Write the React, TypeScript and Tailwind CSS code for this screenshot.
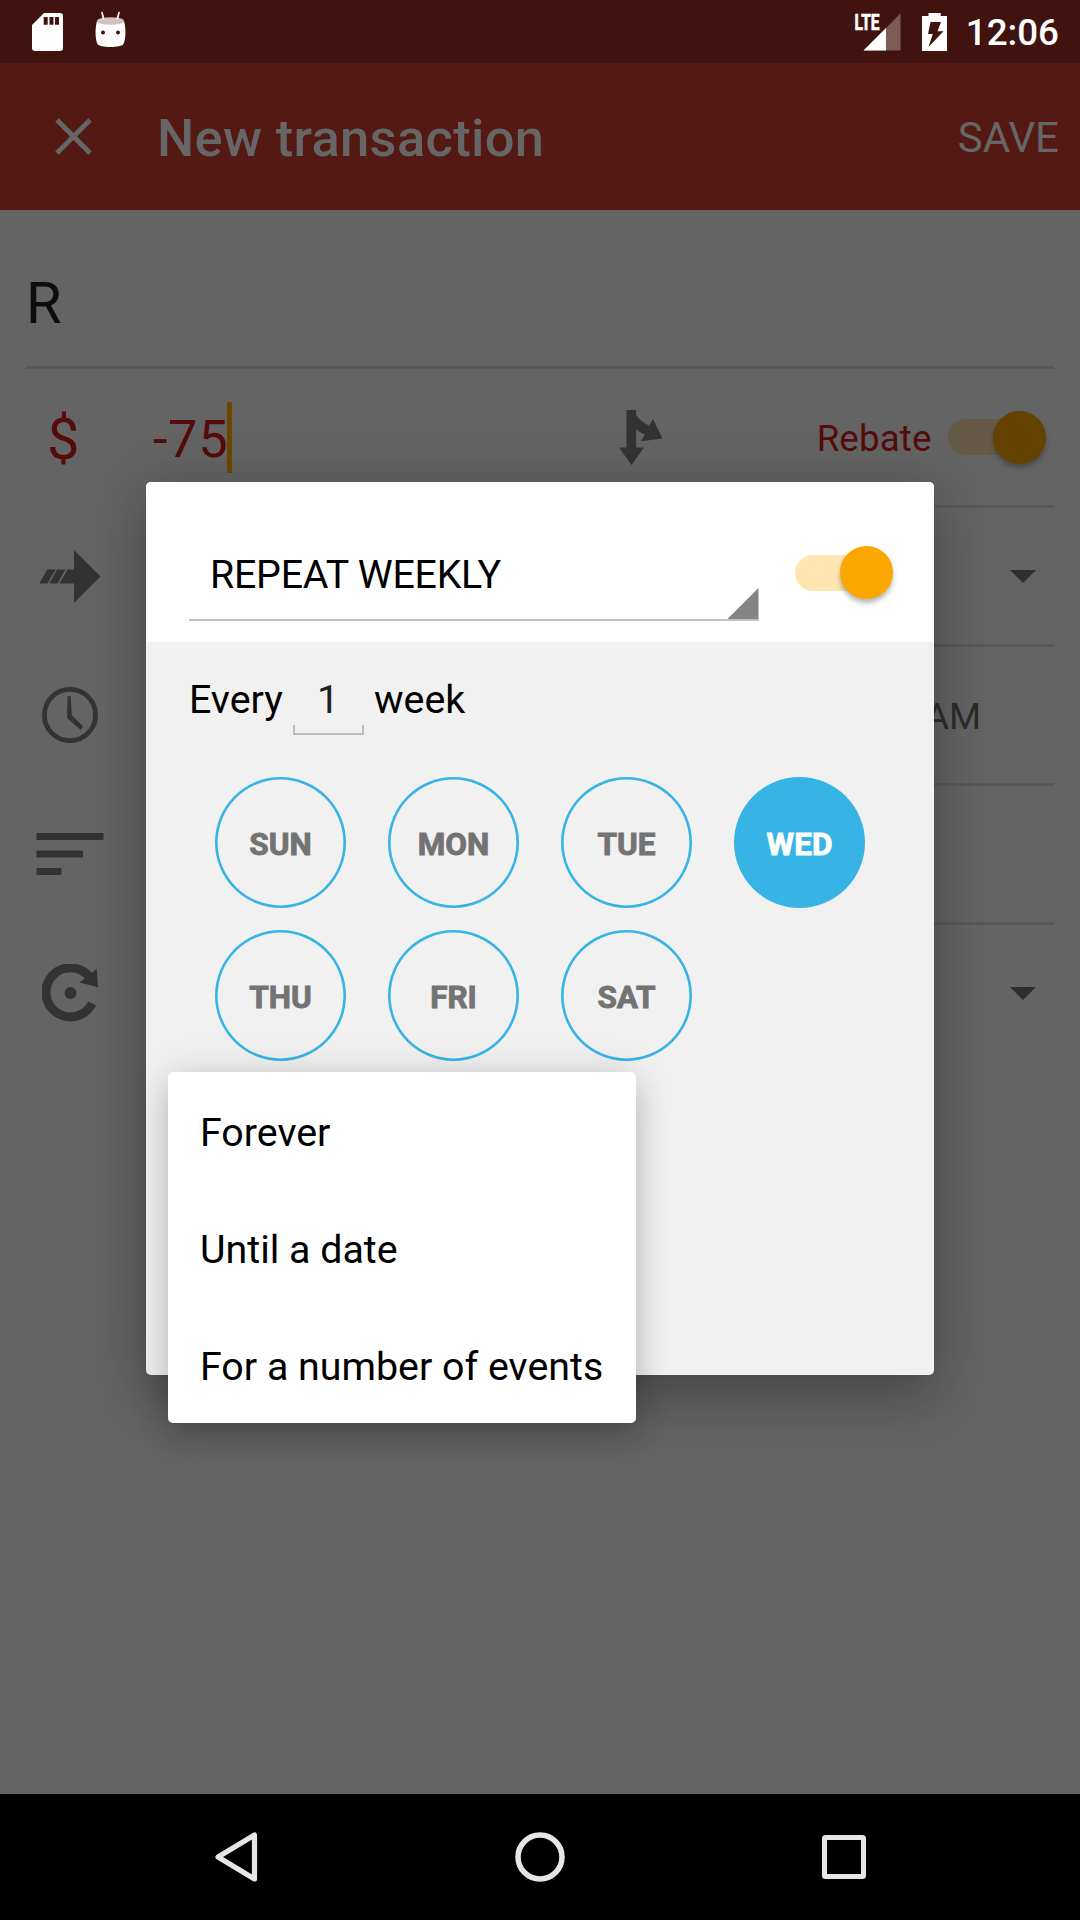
import type { ReactNode } from "react";

const DAYS = ["SUN", "MON", "TUE", "WED", "THU", "FRI", "SAT"];
const END_OPTIONS = ["Forever", "Until a date", "For a number of events"];

function StatusBar() {
  return (
    <header className="flex h-[63px] items-center justify-between bg-[#41130e] pl-8 pr-[21px]">
      <div className="flex items-center gap-8">
        <svg width="31" height="38" viewBox="0 0 31 38">
          <path
            d="M12 0H28a3 3 0 0 1 3 3V35a3 3 0 0 1-3 3H3a3 3 0 0 1-3-3V12Z M11.7 4v7.7h4V4Z M17.5 4v7.7h4V4Z M23 4v7.7h4V4Z"
            fill="#fff"
            fillRule="evenodd"
          />
        </svg>
        <svg width="31" height="42" viewBox="0 0 31 42">
          <path d="M2 10C0 17 0 28 2.500 33C4 37 27 37 28.500 33C31 28 31 17 29 10C27 14 4 14 2 10Z" fill="#fff" />
          <ellipse cx="15.500" cy="10" rx="13.500" ry="3.800" fill="#cfc3c2" />
          <path d="M7 1.500L8.600 8M24 1.500L22.400 8" stroke="#fff" strokeWidth="1.700" strokeLinecap="round" />
          <circle cx="8" cy="21.500" r="2" fill="#41130e" />
          <circle cx="23" cy="21.500" r="2" fill="#41130e" />
        </svg>
      </div>
      <div className="flex items-center">
        <svg width="48" height="50" viewBox="-2 -6 48 50" className="mr-[21px]">
          <path d="M8.500 37.500L45.500 0.500V37.500Z" fill="#7d5c58" />
          <path d="M0 0H24.500V16H0Z" fill="#41130e" />
          <path d="M8.500 37.500L31 15V37.500Z" fill="#fff" />
          <text
            x="-0.500"
            y="16.500"
            fontFamily="Roboto"
            fontWeight="700"
            fontSize="22.500"
            textLength="25"
            lengthAdjust="spacingAndGlyphs"
            fill="#fff"
            stroke="#fff"
            strokeWidth="0.700"
          >
            LTE
          </text>
        </svg>
        <svg width="25" height="38" viewBox="0 0 25 38" className="mr-[19px]">
          <path
            d="M6.500 0H18.700V3H25V38H0V3H6.500Z M8.500 9L6 21H10.800L6.500 34L21.500 18.300H15.500L19 9Z"
            fill="#fff"
            fillRule="evenodd"
          />
        </svg>
        <span className="pt-1 text-[36.75px] font-medium leading-none text-white">12:06</span>
      </div>
    </header>
  );
}

function Toolbar() {
  return (
    <div className="flex h-[147px] items-center bg-[#531912] pl-[55px] pr-[21px] text-[#666]">
      <svg width="37" height="37" viewBox="0 0 37 37" className="mr-[65px]">
        <path d="M2 2L35 35M35 2L2 35" stroke="#666" strokeWidth="5" />
      </svg>
      <h1 className="flex-1 pt-1 text-[52.5px] font-medium leading-none tracking-[0.32px]">New transaction</h1>
      <span className="pt-0.5 text-[42px] leading-none">SAVE</span>
    </div>
  );
}

function Switch({ dimmed }: { dimmed?: boolean }) {
  return (
    <div className="flex h-[53px] w-[98px] items-center">
      <div
        className={
          dimmed
            ? "flex h-9 w-[92px] items-center justify-end rounded-full bg-[#645a46]"
            : "flex h-9 w-[92px] items-center justify-end rounded-full bg-[#ffe5b2]"
        }
      >
        <div
          className={
            dimmed
              ? "-mr-1.5 h-[53px] w-[53px] shrink-0 rounded-full bg-[#644200] shadow-[0_4px_5px_rgba(0,0,0,0.25)]"
              : "-mr-1.5 h-[53px] w-[53px] shrink-0 rounded-full bg-[#fba700] shadow-[0_4px_5px_rgba(0,0,0,0.28)]"
          }
        />
      </div>
    </div>
  );
}

function FormRow({ icon, children, last }: { icon: ReactNode; children?: ReactNode; last?: boolean }) {
  return (
    <div className="flex h-[139px] pr-[26px]">
      <div className="flex h-[136px] w-[147px] shrink-0 items-center">{icon}</div>
      <div
        className={
          last
            ? "flex flex-1 items-center border-b-[3px] border-transparent"
            : "flex flex-1 items-center border-b-[3px] border-[#595959]"
        }
      >
        {children}
      </div>
    </div>
  );
}

function Caret() {
  return (
    <svg width="26" height="13" viewBox="0 0 26 13" className="ml-auto mr-[18.5px]">
      <path d="M0 0H26L13 13Z" fill="#2f2f2f" />
    </svg>
  );
}

function TransferIcon() {
  return (
    <svg width="62" height="53" viewBox="0 0 62 53" className="ml-[39px]">
      <path
        d="M35 0L61.500 26.500L35 53V33.500H20.500L28.500 19.500H35Z M8.200 19.500H16.500L8.500 33.500H0.300Z M18 19.500H26.300L18.600 33.500H10.300Z"
        fill="#333"
      />
    </svg>
  );
}

function ClockIcon() {
  return (
    <svg width="56" height="56" viewBox="0 0 56 56" className="ml-[42px]">
      <circle cx="28" cy="28" r="25.600" fill="none" stroke="#333" strokeWidth="4.800" />
      <path d="M25.500 9H28.700L29.800 28L41 39.500L38.800 43L25 31Z" fill="#333" />
    </svg>
  );
}

function NotesIcon() {
  return (
    <svg width="68" height="42" viewBox="0 0 68 42" className="ml-9">
      <path d="M0.500 0H67.500V7H0.500Z M0.500 17.500H47V24.500H0.500Z M0.500 35H25.500V42H0.500Z" fill="#333" />
    </svg>
  );
}

function RecurIcon() {
  return (
    <svg width="58" height="58" viewBox="0 0 58 58" className="ml-[42px]">
      <path d="M50.200 39.500A24.500 24.500 0 1 1 47.500 13" fill="none" stroke="#333" strokeWidth="9" />
      <path d="M54.700 4.800L56 23.200L37.700 18.500Z" fill="#333" />
      <circle cx="28.500" cy="29" r="6" fill="#333" />
    </svg>
  );
}

function SplitIcon() {
  return (
    <svg width="44" height="55" viewBox="0 0 44 55">
      <path
        d="M7.500 0H17.200V5C20 9.500 25 13 30 15.800L34 9L43.500 28.500L22 31.300L26 24.500C22 23 19 21 17.200 19.500V37.500H25L12.500 55L0 37.500H7.500Z"
        fill="#333"
      />
    </svg>
  );
}

function TransactionForm() {
  return (
    <main className="h-[1584px] bg-[#646464]">
      <div className="mx-[26px] flex h-[159px] items-center border-b-[3px] border-[#595959] pt-8 text-[57.75px] leading-none text-[#0d0d0d]">
        R
      </div>
      <FormRow icon={<span className="pl-[47px] pt-1.5 text-[57.75px] leading-none text-[#540c0c]">$</span>}>
        <span className="ml-[5px] w-[75px] whitespace-nowrap pl-px pt-1 text-[52.5px] leading-none tracking-[0.6px] text-[#540c0c]">-75</span>
        <span className="h-[71px] w-[5px] bg-[#6b4700]" />
        <div className="ml-auto mr-[154px]">
          <SplitIcon />
        </div>
        <span className="mr-4 pt-1 text-[36.75px] leading-none tracking-[0.1px] text-[#540c0c]">Rebate</span>
        <div className="mr-[8.5px]">
          <Switch dimmed />
        </div>
      </FormRow>
      <FormRow icon={<TransferIcon />}>
        <Caret />
      </FormRow>
      <FormRow icon={<ClockIcon />}>
        <span className="ml-auto mr-[73px] pt-1 text-[36.75px] leading-none text-[#2d2d2d]">AM</span>
      </FormRow>
      <FormRow icon={<NotesIcon />} />
      <FormRow icon={<RecurIcon />} last>
        <Caret />
      </FormRow>
    </main>
  );
}

function NavigationBar() {
  return (
    <nav className="flex h-[126px] items-center bg-black">
      <svg width="43" height="50" viewBox="0 0 43 50" className="ml-[215px]">
        <path d="M39.500 3V47L3 25Z" fill="none" stroke="#e6e6e6" strokeWidth="5.200" strokeLinejoin="round" />
      </svg>
      <svg width="50" height="50" viewBox="0 0 50 50" className="ml-[257px]">
        <circle cx="25" cy="25" r="22" fill="none" stroke="#e6e6e6" strokeWidth="5.500" />
      </svg>
      <svg width="44" height="44" viewBox="0 0 44 44" className="ml-[257px]">
        <rect x="2.500" y="2.500" width="39" height="39" rx="1" fill="none" stroke="#e6e6e6" strokeWidth="5" />
      </svg>
    </nav>
  );
}

function RecurrenceDialog() {
  return (
    <section className="absolute left-[146px] top-[482px] h-[893px] w-[788px] overflow-visible rounded-[5px] bg-[#f1f1f1] text-[39.375px] text-black shadow-[0_28px_52px_rgba(0,0,0,0.2),0_0_56px_rgba(0,0,0,0.14)]">
      <div className="flex h-[160px] rounded-t-[5px] bg-white pl-[43px]">
        <div className="flex h-[139px] w-[570px] items-end border-b-2 border-[#c2c2c2]">
          <span className="flex-1 pb-[25px] pl-[21px] leading-none tracking-[-0.25px]">REPEAT WEEKLY</span>
          <svg width="32" height="32" viewBox="0 0 32 32">
            <path d="M31.500 1V32H0.500Z" fill="#848484" />
          </svg>
        </div>
        <div className="ml-9 mt-16">
          <Switch />
        </div>
      </div>
      <div className="flex h-[115px] items-center pl-[43px] leading-none">
        <span className="w-[93px]">Every</span>
        <div className="ml-[11px] flex h-[70px] w-[71px] flex-col">
          <span className="flex flex-1 items-center justify-center pr-px pt-2.5 text-[#212121]">1</span>
          <span className="h-2.5 border-2 border-t-0 border-[#bdbdbd]" />
        </div>
        <span className="ml-2.5">week</span>
      </div>
      <div className="ml-[69px] mt-5 grid w-[650px] grid-cols-[repeat(4,131px)] gap-x-[42px] gap-y-[22px]">
        {DAYS.map((day) => (
          <div
            key={day}
            className={
              day === "WED"
                ? "flex h-[131px] items-center justify-center rounded-full bg-[#37b4e5] pt-1 text-[31.5px] font-bold leading-none text-white [-webkit-text-stroke:0.9px_white]"
                : "flex h-[131px] items-center justify-center rounded-full pt-1 text-[31.5px] font-bold leading-none text-[#737373] shadow-[inset_0_0_0_2.6px_#37b4e5] [-webkit-text-stroke:0.9px_#737373]"
            }
          >
            {day}
          </div>
        ))}
      </div>
      <ul className="absolute left-[22px] top-[590px] w-[468px] rounded-[5px] bg-white shadow-[0_16px_32px_rgba(0,0,0,0.16),0_0_40px_rgba(0,0,0,0.12)]">
        {END_OPTIONS.map((option) => (
          <li key={option} className="flex h-[117px] items-center whitespace-nowrap pl-8 pt-1 leading-none">
            {option}
          </li>
        ))}
      </ul>
    </section>
  );
}

export default function App() {
  return (
    <div className="relative h-[1920px] w-[1080px] overflow-hidden font-['Roboto',sans-serif]">
      <StatusBar />
      <Toolbar />
      <TransactionForm />
      <NavigationBar />
      <RecurrenceDialog />
    </div>
  );
}
